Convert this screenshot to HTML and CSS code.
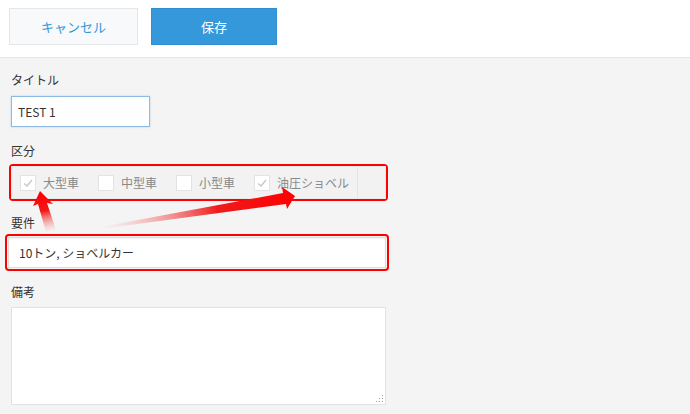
FILE: index.html
```html
<!DOCTYPE html>
<html lang="ja">
<head>
<meta charset="utf-8">
<link rel="stylesheet" href="styles.css">
</head>
<body>
<header class="toolbar">
  <button class="btn btn-cancel">キャンセル</button>
  <button class="btn btn-save">保存</button>
</header>
<main class="form">
  <div class="field">
    <div class="label">タイトル</div>
    <div class="text-input focused">TEST 1</div>
  </div>
  <div class="field">
    <div class="label">区分</div>
    <div class="mark mark-group">
      <div class="check-row">
        <div class="options">
          <div class="option"><span class="box checked"><svg viewBox="0 0 16 16" width="16" height="16"><polyline points="4,8.5 7,11 12,5" fill="none" stroke="#c8c8c8" stroke-width="1.4"/></svg></span><span class="opt-text">大型車</span></div>
          <div class="option"><span class="box"></span><span class="opt-text">中型車</span></div>
          <div class="option"><span class="box"></span><span class="opt-text">小型車</span></div>
          <div class="option"><span class="box checked"><svg viewBox="0 0 16 16" width="16" height="16"><polyline points="4,8.5 7,11 12,5" fill="none" stroke="#c8c8c8" stroke-width="1.4"/></svg></span><span class="opt-text">油圧ショベル</span></div>
        </div>
        <div class="tail"></div>
      </div>
    </div>
  </div>
  <div class="field">
    <div class="label">要件</div>
    <div class="mark mark-input">
      <div class="text-input wide">10トン, ショベルカー</div>
    </div>
  </div>
  <div class="field">
    <div class="label">備考</div>
    <div class="textarea">
      <svg class="grip" viewBox="0 0 8 8" width="8" height="8">
        <rect x="6" y="0" width="1" height="1" fill="#999"/>
        <rect x="3" y="3" width="1" height="1" fill="#999"/>
        <rect x="6" y="3" width="1" height="1" fill="#999"/>
        <rect x="0" y="6" width="1" height="1" fill="#999"/>
        <rect x="3" y="6" width="1" height="1" fill="#999"/>
        <rect x="6" y="6" width="1" height="1" fill="#999"/>
      </svg>
    </div>
  </div>
</main>
<svg class="arrows" width="690" height="414" viewBox="0 0 690 414">
  <defs>
    <linearGradient id="g1" x1="45" y1="192" x2="52" y2="232" gradientUnits="userSpaceOnUse">
      <stop offset="0" stop-color="#ff0000"/>
      <stop offset="0.45" stop-color="#f01818"/>
      <stop offset="1" stop-color="#f4a0a0" stop-opacity="0"/>
    </linearGradient>
    <linearGradient id="g2" x1="295" y1="196" x2="100" y2="228" gradientUnits="userSpaceOnUse">
      <stop offset="0" stop-color="#ff0000"/>
      <stop offset="0.4" stop-color="#ee1c1c"/>
      <stop offset="1" stop-color="#f4a8a8" stop-opacity="0"/>
    </linearGradient>
  </defs>
  <polygon points="40,191 53,204 47,203 56,230 46,232 38,204 33,206" fill="url(#g1)"/>
  <polygon points="295,196 287,209 286,204 100,229 100,227 283,193 282,187" fill="url(#g2)"/>
</svg>
</body>
</html>
```
FILE: styles.css
```css
html, body {
  margin: 0;
  padding: 0;
}
body {
  width: 690px;
  height: 414px;
  overflow: hidden;
  background: #f4f4f4;
  font-family: "Noto Sans CJK JP", "Noto Sans", sans-serif;
  color: #333;
  position: relative;
}
.toolbar {
  height: 58px;
  box-sizing: border-box;
  background: #fff;
  border-bottom: 1px solid #e6e6e6;
  display: flex;
  align-items: flex-start;
  gap: 13px;
  padding: 8px 0 0 9px;
}
.btn {
  height: 37px;
  font-family: inherit;
  font-size: 13px;
  border-radius: 0;
  padding: 0;
  cursor: pointer;
}
.btn-cancel {
  width: 129px;
  background: #f7f9fa;
  border: 1px solid #e3e7e8;
  color: #3498db;
}
.btn-save {
  width: 126px;
  background: #3498db;
  border: 1px solid #2f8fd3;
  color: #fff;
}
.form {
  padding: 13px 0 0 11px;
}
.field {
  display: flex;
  flex-direction: column;
  align-items: flex-start;
}
.label {
  font-size: 12px;
  line-height: 18px;
  height: 18px;
  color: #333;
}
.text-input {
  box-sizing: border-box;
  background: #fff;
  border: 1px solid #e3e3e3;
  font-size: 12px;
  display: flex;
  align-items: center;
  padding-left: 6px;
  color: #333;
}
.focused {
  width: 139px;
  height: 31px;
  margin-top: 7px;
  margin-bottom: 15px;
  border-color: #8dbbe6;
  box-shadow: 0 0 2px rgba(52, 152, 219, 0.35);
}
.mark {
  border: 2px solid #ff0000;
  border-radius: 4px;
  box-sizing: border-box;
}
.mark-group {
  margin-top: 4px;
  margin-left: -2px;
  width: 379px;
  height: 37px;
  margin-bottom: 13px;
}
.check-row {
  height: 100%;
  display: flex;
  box-sizing: border-box;
  border: 1px solid #e8e8e8;
  background: #f2f2f2;
}
.options {
  width: 346px;
  border-right: 1px solid #e4e4e4;
  display: flex;
  align-items: center;
  gap: 19px;
  padding-left: 8px;
  box-sizing: border-box;
}
.tail {
  flex: 1;
}
.option {
  display: flex;
  align-items: center;
  gap: 7px;
}
.box {
  width: 16px;
  height: 16px;
  box-sizing: border-box;
  background: #fff;
  border: 1px solid #e3e3e3;
  display: block;
  position: relative;
}
.box svg {
  position: absolute;
  left: -1px;
  top: -1px;
}
.opt-text {
  font-size: 12px;
  color: #888;
  line-height: 16px;
}
.mark-input {
  margin-top: 2px;
  margin-left: -6px;
  width: 384px;
  height: 37px;
  padding: 1px;
  margin-bottom: 12px;
}
.wide {
  width: 100%;
  height: 100%;
  padding-left: 10px;
  font-size: 12px;
  border-color: #dcdcdc;
  box-shadow: inset 0 1px 2px rgba(0, 0, 0, 0.06);
}
.textarea {
  margin-top: 6px;
  width: 375px;
  height: 98px;
  box-sizing: border-box;
  background: #fff;
  border: 1px solid #e3e3e3;
  position: relative;
}
.grip {
  position: absolute;
  right: 1px;
  bottom: 1px;
}
.arrows {
  position: absolute;
  left: 0;
  top: 0;
  pointer-events: none;
}
```
